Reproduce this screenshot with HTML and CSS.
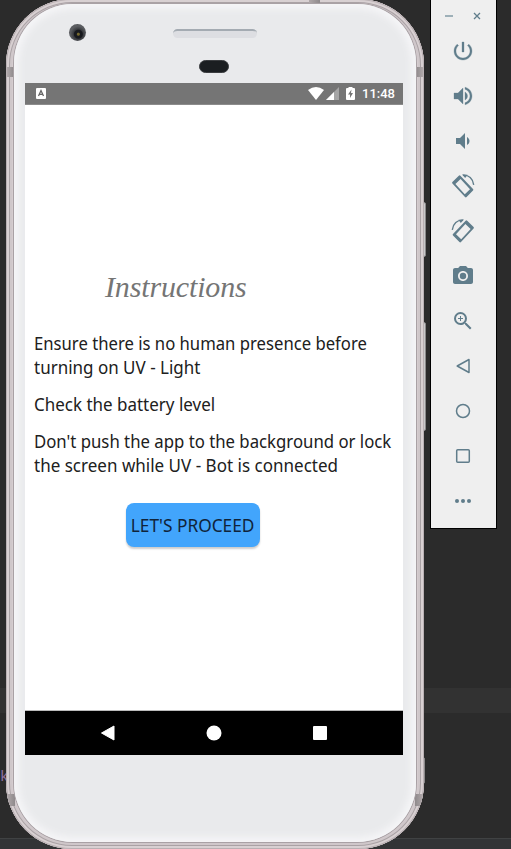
FILE: index.html
```html
<!DOCTYPE html>
<html lang="en">
<head>
<meta charset="utf-8">
<title>Instructions</title>
<link rel="stylesheet" href="styles.css">
</head>
<body>
<div class="desktop">
  <div class="editor-line"></div>
  <div class="editor-status"></div>
  <span class="editor-char">k</span>
  <i class="side-button power"></i>
  <i class="side-button volume"></i>
  <i class="side-button lower"></i>
  <div class="phone">
    <i class="band top"></i>
    <i class="band left-up"></i><i class="band right-up"></i>
    <i class="band left-low"></i><i class="band right-low"></i>
    <div class="face">
      <i class="camera"></i><i class="speaker"></i><i class="sensor"></i>
      <div class="screen">
        <header class="status">
          <svg class="app-mark" width="10" height="11" viewBox="0 0 10 11"><rect width="10" height="11" rx="1" fill="#fff"/><path d="M2.5 8 5 2.5 7.500 8M3.500 6.300h3" fill="none" stroke="#666" stroke-width="1.300"/></svg>
          <svg class="wifi" width="16" height="13" viewBox="0 0 16 13"><path d="M0 3Q8-3 16 3L8 13Z" fill="#fff"/></svg>
          <svg class="signal" width="13" height="13" viewBox="0 0 13 13"><path d="M13 0V13H0Z" fill="#a5a5a5"/><path d="M8 5V13H0Z" fill="#fff"/></svg>
          <svg class="battery" width="9" height="13" viewBox="0 0 9 13"><path d="M2.500 1V0h4v1H8q1 0 1 1v10q0 1-1 1H1q-1 0-1-1V2q0-1 1-1Z" fill="#fff"/><path d="M5.500 2.500 2 7.500h2V11l3-5H5Z" fill="#757575"/></svg>
          <time>11:48</time>
        </header>
        <main class="content">
          <h1>Instructions</h1>
          <p><span class="l1">Ensure there is no human presence before</span><br><span class="l2">turning on UV - Light</span></p>
          <p><span class="l3">Check the battery level</span></p>
          <p><span class="l4">Don't push the app to the background or lock</span><br><span class="l5">the screen while UV - Bot is connected</span></p>
          <button><span>LET'S PROCEED</span></button>
        </main>
        <nav class="navbar">
          <svg width="16" height="16" viewBox="0 0 16 16"><path d="M14 1V15L1.500 8Z" fill="#fff" stroke="#fff" stroke-linejoin="round"/></svg>
          <svg width="16" height="16" viewBox="0 0 16 16"><circle cx="8" cy="8" r="7.500" fill="#fff"/></svg>
          <svg width="16" height="16" viewBox="0 0 16 16"><rect x="1" y="1" width="14" height="14" rx="1" fill="#fff"/></svg>
        </nav>
      </div>
    </div>
  </div>
  <aside class="tools">
    <div class="window-controls">
      <svg width="8" height="8" viewBox="0 0 8 8"><path d="M0 4h8" stroke="#9eb0b8" stroke-width="2"/></svg>
      <svg width="8" height="8" viewBox="0 0 8 8"><path d="m1 1 6 6M7 1 1 7" stroke="#607d8b" stroke-width="1.300"/></svg>
    </div>
    <svg viewBox="0 0 24 24"><path d="M13 3h-2v10h2V3zm4.830 2.170-1.420 1.420C17.990 7.860 19 9.810 19 12c0 3.870-3.130 7-7 7s-7-3.130-7-7c0-2.190 1.010-4.140 2.580-5.420L6.170 5.170C4.230 6.820 3 9.260 3 12c0 4.970 4.030 9 9 9s9-4.030 9-9c0-2.740-1.230-5.180-3.170-6.830z" stroke="#607d8b" stroke-width=".3"/></svg>
    <svg viewBox="0 0 24 24"><path d="M3 9v6h4l5 5V4L7 9H3zm13.500 3c0-1.770-1.020-3.290-2.500-4.030v8.050c1.480-.730 2.500-2.250 2.500-4.020zM14 3.230v2.060c2.890.86 5 3.540 5 6.710s-2.110 5.850-5 6.710v2.060c4.010-.91 7-4.490 7-8.770s-2.990-7.860-7-8.770z" stroke="#607d8b" stroke-width=".3"/></svg>
    <svg viewBox="0 0 24 24"><path d="M18.500 12c0-1.770-1.020-3.290-2.500-4.030v8.050c1.480-.730 2.500-2.250 2.500-4.020zM5 9v6h4l5 5V4L9 9H5z"/></svg>
    <svg viewBox="0 0 24 24"><path fill-rule="evenodd" d="M7.800 1.700 1.400 8.100q-.7.700 0 1.400L14 23q.8.800 1.600 0l6.400-6.400q.8-.8 0-1.600L9.400 1.700q-.8-.7-1.600 0ZM9.600 5 19 15.200l-5.200 5.100L4.400 10Z"/><path d="M12 1.200c5.700-.5 10 3.600 10.700 9.600" fill="none" stroke="#607d8b" stroke-width="1.400"/><path d="M11 .5l5.500.2L14.200 4Z"/></svg>
    <svg viewBox="0 0 24 24"><g transform="matrix(-1 0 0 1 24 0)"><path fill-rule="evenodd" d="M7.800 1.700 1.400 8.100q-.7.700 0 1.400L14 23q.8.800 1.600 0l6.400-6.400q.8-.8 0-1.600L9.400 1.700q-.8-.7-1.600 0ZM9.600 5 19 15.200l-5.200 5.100L4.400 10Z"/><path d="M12 1.200c5.700-.5 10 3.600 10.700 9.600" fill="none" stroke="#607d8b" stroke-width="1.400"/><path d="M11 .5l5.500.2L14.200 4Z"/></g></svg>
    <svg viewBox="0 0 24 24"><circle cx="12" cy="12" r="3.200"/><path d="M9 2 7.170 4H4c-1.100 0-2 .9-2 2v12c0 1.100.9 2 2 2h16c1.100 0 2-.9 2-2V6c0-1.100-.9-2-2-2h-3.170L15 2H9zm3 15c-2.760 0-5-2.240-5-5s2.240-5 5-5 5 2.240 5 5-2.240 5-5 5z"/></svg>
    <svg viewBox="0 0 24 24"><path d="M15.500 14h-.79l-.28-.27A6.470 6.470 0 0 0 16 9.500 6.500 6.500 0 1 0 9.500 16c1.610 0 3.090-.59 4.230-1.570l.27.280v.79l5 4.990L20.490 19l-4.990-5zm-6 0a4.500 4.500 0 1 1 0-9 4.500 4.500 0 0 1 0 9zM12 10h-2v2H9v-2H7V9h2V7h1v2h2v1z"/></svg>
    <svg class="line" viewBox="0 0 20 20"><path d="M16 3.500V16.500L4.200 10Z"/></svg>
    <svg class="line" viewBox="0 0 20 20"><circle cx="10" cy="10" r="6.500"/></svg>
    <svg class="line" viewBox="0 0 20 20"><rect x="3.700" y="3.700" width="12.600" height="12.600" rx="1"/></svg>
    <svg viewBox="0 0 20 20"><circle cx="4" cy="10" r="2"/><circle cx="10" cy="10" r="2"/><circle cx="16" cy="10" r="2"/></svg>
  </aside>
</div>
</body>
</html>
```
FILE: styles.css
```css
* { box-sizing: border-box; }
body { margin: 0; background: #2b2b2b; overflow: hidden; }
.desktop { position: relative; display: flex; align-items: flex-start; width: 511px; height: 849px; overflow: hidden; font-family: "Noto Sans", sans-serif; }
.editor-line { position: absolute; left: 0; right: 0; top: 688px; height: 25px; background: #323232; }
.editor-status { position: absolute; left: 0; right: 0; top: 838px; height: 11px; background: #323436; border-top: 1px solid #404243; }
.editor-char { position: absolute; left: 0; top: 768px; font: 14px/18px "Liberation Mono", monospace; letter-spacing: -1px; color: #9373a5; }
.side-button { position: absolute; left: 419px; width: 7px; border-radius: 2px; background: #c9c9ca; border: 1px solid #8b898a; }
.power { top: 202px; height: 55px; }
.volume { top: 322px; height: 109px; }
.lower { top: 757px; left: 418px; height: 27px; }

.phone { position: relative; flex: none; width: 418px; height: 850px; margin: -1px 0 0 6px; padding: 5px 8px 7px; border-radius: 66px; overflow: hidden; background: #d5cccf; box-shadow: inset 0 0 0 1px #b9b0b3, inset 0 0 0 3px #d8d0d2, inset 0 0 0 4px #aaa2a5, inset 0 0 0 6px #cfc7ca; }
.band { position: absolute; background: linear-gradient(90deg, #b0a8aa, #8e898b); }
.top { left: 303px; top: 1px; width: 11px; height: 3px; }
.left-up, .right-up { top: 68px; width: 7px; height: 10px; }
.left-low, .right-low { top: 795px; width: 8px; height: 12px; }
.left-up, .left-low { left: 1px; }
.right-up, .right-low { right: 1px; transform: scaleX(-1); }
.face { position: relative; height: 838px; padding: 79px 13px 0 11px; border-radius: 59px; background: #e9eaec; box-shadow: inset 0 0 7px 5px #f5f5f7, 0 0 0 1px #a9a1a5; }
.camera { position: absolute; left: 55px; top: 20px; width: 17px; height: 17px; border-radius: 50%; background: radial-gradient(circle at 55% 60%, #76692f 0 1px, #17191e 2px 4px, #3a3c40 5px, #5b5d61 8px); }
.speaker { position: absolute; left: 159px; top: 25px; width: 84px; height: 9px; border-radius: 5px; background: #dddee2; border-top: 2px solid #a4abb2; }
.sensor { position: absolute; left: 185px; top: 56px; width: 30px; height: 13px; border-radius: 7px; background: #1b1e21; border: 1px solid #3b3d40; }
.screen { display: flex; flex-direction: column; width: 378px; height: 672px; background: #fff; }
.status { display: flex; align-items: center; flex: none; height: 22px; padding: 0 8px 0 11px; background: #757575; border-bottom: 1px solid #8c8c8c; color: #fff; }
.wifi { margin-left: auto; }
.signal { margin-left: 2px; }
.battery { margin: 0 7px 0 7px; }
time { font: 500 13px/20px Roboto, sans-serif; width: 33px; padding-top: 1px; white-space: nowrap; }
.content { flex: 1; padding: 163px 9px 0; border-bottom: 1px solid #bbb; color: #202020; }
h1 { margin: 0 0 25px 71px; font: italic 30px/38px "Liberation Serif", serif; letter-spacing: -.15px; color: #757575; }
p { margin: 0 0 13px; font-size: 17.5px; line-height: 24px; white-space: nowrap; }
p span { display: inline-block; transform-origin: left; }
.l1 { transform: scaleX(.953); }
.l2 { transform: scaleX(.971); }
.l3 { transform: scaleX(.97); }
.l4 { transform: scaleX(.957); }
.l5 { transform: scaleX(.973); }
button { display: flex; align-items: center; justify-content: center; width: 134px; height: 44px; margin: 26px 0 0 92px; padding: 0; border: 0; border-radius: 8px; background: #42a5fc; box-shadow: 0 2px 2px #0003; font: 17.5px/24px "Noto Sans", sans-serif; color: #10243a; white-space: nowrap; }
button span { transform: scaleX(.988); }
.navbar { display: flex; align-items: center; justify-content: space-between; flex: none; height: 44px; padding: 0 75px; background: #000; }

.tools { position: relative; display: flex; flex-direction: column; align-items: center; flex: none; width: 67px; height: 530px; margin: -1px 0 0 6px; padding-right: 2px; border: 1px solid #000; background: #efefef; fill: #607d8b; }
.window-controls { display: flex; justify-content: space-between; width: 36px; height: 8px; margin: 12px 0 19px; }
.tools > svg { width: 24px; height: 24px; margin-bottom: 21px; flex: none; overflow: visible; }
.tools > svg:nth-last-child(-n+4) { width: 20px; height: 20px; margin: 2px 0 23px; }
.tools .line { fill: none; stroke: #607d8b; stroke-width: 1.500; stroke-linejoin: round; }
```
